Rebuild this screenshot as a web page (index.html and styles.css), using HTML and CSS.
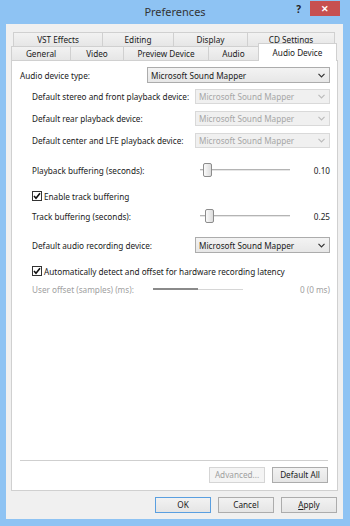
FILE: index.html
```html
<!DOCTYPE html>
<html lang="en">
<head>
  <meta charset="UTF-8">
  <title>Preferences</title>
  <link rel="stylesheet" href="styles.css">
</head>
<body>

<div class="window">
  <div class="titlebar">
    <span></span>
    <span class="title">Preferences</span>
    <div class="caption">
      <span class="help">?</span>
      <span class="close">&#x2715;</span>
    </div>
  </div>

  <div class="client">
    <div class="tabs">
      <div class="tab-row back">
        <div class="tab w89">VST Effects</div>
        <div class="tab w71">Editing</div>
        <div class="tab w74">Display</div>
        <div class="tab w88">CD Settings</div>
      </div>
      <div class="tab-row front">
        <div class="tab w59">General</div>
        <div class="tab w53">Video</div>
        <div class="tab w85">Preview Device</div>
        <div class="tab w50">Audio</div>
        <div class="tab selected">Audio Device</div>
      </div>
    </div>

    <div class="panel">
      <div class="row first">
        <span>Audio device type:</span>
        <div class="combo wide">Microsoft Sound Mapper<svg class="chev" width="7" height="5" viewBox="0 0 7 5"><polyline points="0.5,0.8 3.5,3.8 6.5,0.8" fill="none" stroke="#333" stroke-width="1.2"/></svg></div>
      </div>

      <div class="sub">
        <div class="row line">
          <span>Default stereo and front playback device:</span>
          <div class="combo disabled">Microsoft Sound Mapper<svg class="chev" width="7" height="5" viewBox="0 0 7 5"><polyline points="0.5,0.8 3.5,3.8 6.5,0.8" fill="none" stroke="#bbb" stroke-width="1.2"/></svg></div>
        </div>
        <div class="row line">
          <span>Default rear playback device:</span>
          <div class="combo disabled">Microsoft Sound Mapper<svg class="chev" width="7" height="5" viewBox="0 0 7 5"><polyline points="0.5,0.8 3.5,3.8 6.5,0.8" fill="none" stroke="#bbb" stroke-width="1.2"/></svg></div>
        </div>
        <div class="row line">
          <span>Default center and LFE playback device:</span>
          <div class="combo disabled">Microsoft Sound Mapper<svg class="chev" width="7" height="5" viewBox="0 0 7 5"><polyline points="0.5,0.8 3.5,3.8 6.5,0.8" fill="none" stroke="#bbb" stroke-width="1.2"/></svg></div>
        </div>

        <div class="row slider-row playback">
          <span class="slabel">Playback buffering (seconds):</span>
          <div class="slider"><div class="track"></div><div class="thumb" style="left:3px"></div></div>
          <span class="value">0.10</span>
        </div>

        <div class="row check-row enable">
          <svg class="check" width="10" height="10" viewBox="0 0 10 10"><rect x="0.5" y="0.5" width="9" height="9" fill="#fff" stroke="#333"/><polyline points="2,5 4,7.3 8,2.3" fill="none" stroke="#111" stroke-width="1.6"/></svg>
          <span>Enable track buffering</span>
        </div>

        <div class="row slider-row trackbuf">
          <span class="slabel">Track buffering (seconds):</span>
          <div class="slider"><div class="track"></div><div class="thumb" style="left:5px"></div></div>
          <span class="value">0.25</span>
        </div>

        <div class="row recording">
          <span>Default audio recording device:</span>
          <div class="combo">Microsoft Sound Mapper<svg class="chev" width="7" height="5" viewBox="0 0 7 5"><polyline points="0.5,0.8 3.5,3.8 6.5,0.8" fill="none" stroke="#333" stroke-width="1.2"/></svg></div>
        </div>

        <div class="row check-row autodetect">
          <svg class="check" width="10" height="10" viewBox="0 0 10 10"><rect x="0.5" y="0.5" width="9" height="9" fill="#fff" stroke="#333"/><polyline points="2,5 4,7.3 8,2.3" fill="none" stroke="#111" stroke-width="1.6"/></svg>
          <span>Automatically detect and offset for hardware recording latency</span>
        </div>

        <div class="row slider-row offset muted">
          <span class="olabel">User offset (samples) (ms):</span>
          <div class="slider off"><div class="fill" style="width:45px"></div><div class="rest"></div></div>
          <span class="value">0 (0 ms)</span>
        </div>
      </div>

      <div class="separator"></div>
      <div class="panel-buttons">
        <div class="btn disabled">Advanced...</div>
        <div class="btn">Default All</div>
      </div>
    </div>

    <div class="dialog-buttons">
      <div class="btn default">OK</div>
      <div class="btn">Cancel</div>
      <div class="btn"><u>A</u>pply</div>
    </div>
  </div>
</div>

</body>
</html>
```

FILE: styles.css
```css
body { margin: 0; font-family: "Noto Sans", "Open Sans", sans-serif; font-size: 8.2px; color: #1a1a1a; white-space: nowrap; }
.window { width: 350px; height: 526px; background: #8ec3f3; display: flex; flex-direction: column; }

.titlebar { height: 24px; display: grid; grid-template-columns: 1fr auto 1fr; }
.title { font-size: 11px; color: #333; line-height: 24px; }
.caption { display: flex; justify-content: flex-end; align-items: flex-start; }
.help { font-size: 10px; font-weight: bold; color: #222; margin: 2px 9px 0 0; }
.close { width: 30px; height: 15px; margin: 1px 10px 0 0; background: #c75050; color: #fff; font-size: 9px; font-weight: bold; text-align: center; line-height: 15px; }

.client { flex: 1; margin: 0 7px 7px 6px; background: #f0f0f0; display: flex; flex-direction: column; padding: 8px 0 6px 0; }

.tabs { height: 28px; }
.tab-row { display: flex; height: 14px; }
.tab-row.back { margin-left: 7px; }
.tab-row.front { margin-left: 5px; position: relative; z-index: 2; }
.tab { height: 14px; box-sizing: border-box; border: 1px solid #d0d0d0; border-right: none; border-bottom: none; background: linear-gradient(#f2f2f2, #e6e6e6); text-align: center; line-height: 13px; }
.tab:last-child { border-right: 1px solid #d0d0d0; }
.w89 { width: 89px; } .w71 { width: 71px; } .w74 { width: 74px; } .w88 { width: 88px; }
.w59 { width: 59px; } .w53 { width: 53px; } .w85 { width: 85px; } .w50 { width: 50px; }
.tab.selected { width: 79px; height: 18px; margin-top: -3px; background: #fff; line-height: 17px; border-right: 1px solid #d0d0d0; }

.panel { flex: 1; margin: 0 5px; background: #fff; border: 1px solid #d0d0d0; display: flex; flex-direction: column; padding: 0 7px 7px 8px; }

.row { display: flex; align-items: center; }
.row.first { margin-top: 6px; height: 16px; justify-content: space-between; }
.sub { padding-left: 12px; display: flex; flex-direction: column; }
.row.line { height: 15px; margin-top: 6px; justify-content: space-between; }
.row.line + .row.line { margin-top: 7px; }

.combo { width: 135px; height: 15px; flex-shrink: 0; box-sizing: border-box; border: 1px solid #acacac; background: linear-gradient(#f3f3f3, #e7e7e7); padding-left: 3px; display: flex; align-items: center; justify-content: space-between; padding-right: 4px; }
.combo.wide { width: 183px; height: 16px; }
.combo.disabled { border-color: #d9d9d9; background: #f0f0f0; color: #a6a6a6; }

.slider-row { height: 16px; }
.playback { margin-top: 14px; }
.trackbuf { margin-top: 5px; }
.slabel { width: 168px; }
.olabel { width: 121px; }
.slider { width: 90px; height: 16px; position: relative; }
.track { position: absolute; left: 0; right: 0; top: 7px; height: 1px; background: #b4b4b4; border-bottom: 1px solid #e6e6e6; }
.thumb { position: absolute; top: 1px; width: 9px; height: 14px; box-sizing: border-box; border: 1px solid #8c8c8c; border-radius: 2px; background: linear-gradient(90deg, #fafafa, #dcdcdc); }
.value { flex: 1; text-align: right; }

.slider.off { display: flex; align-items: center; height: 14px; }
.slider.off .fill { height: 2px; background: #8a8a8a; }
.slider.off .rest { flex: 1; height: 1px; background: #d6d6d6; }

.check-row { height: 14px; }
.check { margin-right: 2px; }
.enable { margin-top: 11px; }
.recording { margin-top: 13px; height: 16px; justify-content: space-between; }
.recording .combo { height: 16px; }
.autodetect { margin-top: 11px; }
.offset { margin-top: 4px; height: 14px; }
.muted { color: #a0a0a0; }

.separator { margin-top: auto; margin-right: 2px; height: 1px; background: #cfcfcf; }
.panel-buttons { display: flex; justify-content: flex-end; gap: 7px; margin-top: 6px; margin-right: 2px; }

.btn { width: 56px; height: 16px; box-sizing: border-box; border: 1px solid #acacac; background: linear-gradient(#f2f2f2, #e5e5e5); text-align: center; line-height: 14px; }
.btn.disabled { border-color: #d5d5d5; background: #f4f4f4; color: #a0a0a0; }
.btn.default { border-color: #5a9fe0; }
.dialog-buttons { display: flex; justify-content: flex-end; gap: 7px; margin: 6px 6px 0 0; }
```
